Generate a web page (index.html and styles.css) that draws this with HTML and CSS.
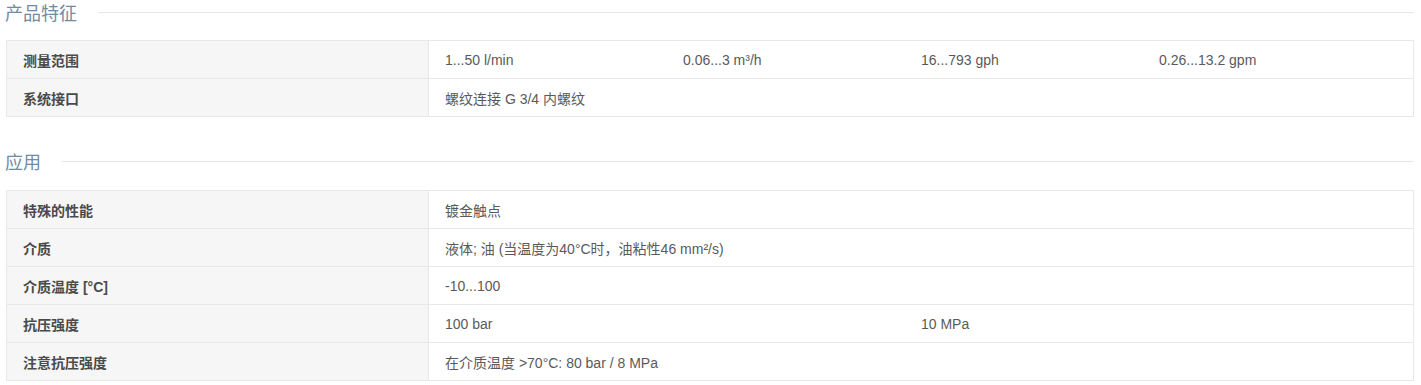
FILE: index.html
```html
<!DOCTYPE html>
<html lang="zh-CN">
<head>
<meta charset="utf-8">
<title>产品特征</title>
<link rel="stylesheet" href="styles.css">
</head>
<body>
<div class="page">
  <section class="section">
    <h2 class="section-title"><span class="title-text">产品特征</span><span class="title-rule"></span></h2>
    <div class="spec-table">
      <div class="spec-row">
        <div class="spec-label">测量范围</div>
        <div class="spec-value">
          <span class="val">1...50 l/min</span>
          <span class="val">0.06...3 m³/h</span>
          <span class="val">16...793 gph</span>
          <span class="val">0.26...13.2 gpm</span>
        </div>
      </div>
      <div class="spec-row">
        <div class="spec-label">系统接口</div>
        <div class="spec-value"><span class="val val-wide">螺纹连接 G 3/4 内螺纹</span></div>
      </div>
    </div>
  </section>

  <section class="section section-second">
    <h2 class="section-title"><span class="title-text">应用</span><span class="title-rule"></span></h2>
    <div class="spec-table">
      <div class="spec-row">
        <div class="spec-label">特殊的性能</div>
        <div class="spec-value"><span class="val val-wide">镀金触点</span></div>
      </div>
      <div class="spec-row">
        <div class="spec-label">介质</div>
        <div class="spec-value"><span class="val val-wide">液体; 油 (当温度为40°C时，油粘性46 mm²/s)</span></div>
      </div>
      <div class="spec-row">
        <div class="spec-label">介质温度 [°C]</div>
        <div class="spec-value"><span class="val val-wide">-10...100</span></div>
      </div>
      <div class="spec-row">
        <div class="spec-label">抗压强度</div>
        <div class="spec-value">
          <span class="val val-half">100 bar</span>
          <span class="val val-half">10 MPa</span>
        </div>
      </div>
      <div class="spec-row">
        <div class="spec-label">注意抗压强度</div>
        <div class="spec-value"><span class="val val-wide">在介质温度 &gt;70°C: 80 bar / 8 MPa</span></div>
      </div>
    </div>
  </section>
</div>
</body>
</html>
```

FILE: styles.css
```css
* {
  box-sizing: border-box;
}

html, body {
  margin: 0;
  padding: 0;
  background: #ffffff;
}

body {
  font-family: "Liberation Sans", Arial, "Noto Sans CJK SC", sans-serif;
  font-size: 14px;
  color: #555555;
}

.page {
  padding: 0 7px 0 6px;
}

.section-title {
  display: flex;
  align-items: center;
  margin: 0 0 16px -1px;
  height: 24px;
  font-weight: normal;
  font-size: 18px;
  line-height: 24px;
  color: #6f8ca4;
  font-family: "Noto Sans CJK SC", "Liberation Sans", sans-serif;
}

.title-text {
  flex: none;
}

.title-rule {
  flex: 1;
  height: 1px;
  margin-left: 21px;
  background: #e6e6e6;
}

.section-second {
  margin-top: 32px;
}

.section-second .section-title {
  margin-bottom: 17px;
}

.spec-table {
  border: 1px solid #e8e8e8;
  border-bottom: none;
}

.spec-row {
  display: grid;
  grid-template-columns: 422px 1fr;
  border-bottom: 1px solid #e8e8e8;
  height: 38px;
}

.spec-label {
  background: #f6f6f6;
  border-right: 1px solid #e8e8e8;
  padding: 0 16px;
  display: flex;
  align-items: center;
  font-weight: bold;
  color: #4a4a4a;
}

.spec-value {
  display: grid;
  grid-template-columns: repeat(4, 1fr);
  align-items: center;
  padding: 0 16px;
}

.val {
  white-space: nowrap;
  color: #5a5a5a;
}

.val-wide {
  grid-column: 1 / span 4;
}

.val-half {
  grid-column: span 2;
}
```
